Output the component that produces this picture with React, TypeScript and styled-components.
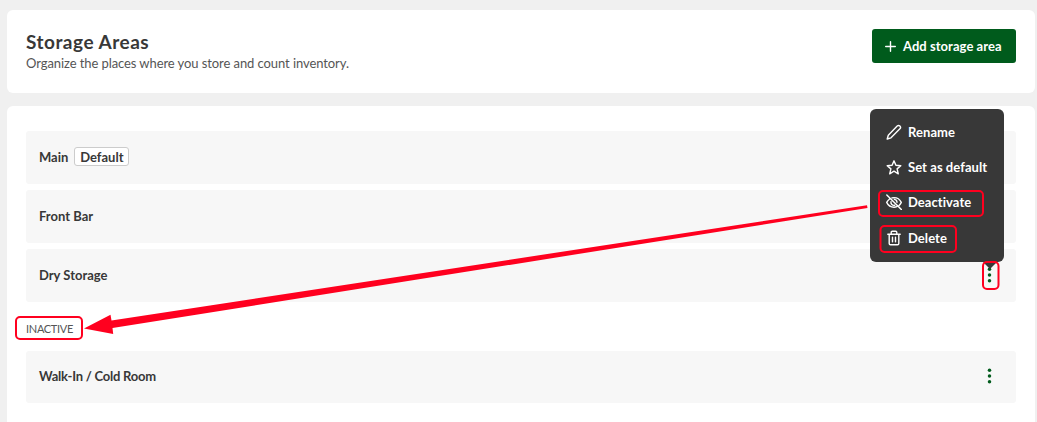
import React from 'react';
import styled, { createGlobalStyle } from 'styled-components';

const GlobalStyle = createGlobalStyle`
  * {
    box-sizing: border-box;
  }

  body {
    margin: 0;
    background: #f0f0f0;
    color: #383838;
    font-family: Lato, 'Open Sans', sans-serif;
    overflow: hidden;
  }
`;

const Page = styled.div`
  position: relative;
  display: flex;
  flex-direction: column;
  gap: 13px;
  height: 422px;
  padding: 10px 2px 0 7px;
  overflow: hidden;
`;

const Header = styled.header`
  display: flex;
  justify-content: space-between;
  align-items: flex-start;
  height: 83px;
  flex-shrink: 0;
  padding: 19px 19px 0;
  background: #fff;
  border-radius: 6px;
`;

const Title = styled.h1`
  margin: 1px 0 0;
  font-size: 19px;
  line-height: 24px;
  font-weight: 700;
  letter-spacing: 0.5px;
`;

const Subtitle = styled.p`
  margin: 0;
  font-size: 13px;
  line-height: 18px;
  letter-spacing: -0.08px;
  color: #555;
`;

const AddButton = styled.button`
  display: flex;
  align-items: center;
  gap: 7px;
  width: 144px;
  height: 34px;
  padding: 0 0 0 13px;
  background: #005b1c;
  color: #fff;
  border: none;
  border-radius: 3px;
  font-family: inherit;
  font-size: 13px;
  font-weight: 700;
  letter-spacing: 0.05px;
  white-space: nowrap;
`;

const Panel = styled.main`
  height: 340px;
  flex-shrink: 0;
  padding: 25px 19px;
  background: #fff;
  border-radius: 6px;
`;

const List = styled.div`
  display: flex;
  flex-direction: column;
  gap: 6px;
`;

const Row = styled.div<{ $inactive?: boolean }>`
  display: flex;
  align-items: center;
  height: ${({ $inactive }) => ($inactive ? 52 : 53)}px;
  padding: 0 24px 2px 13px;
  background: #f7f7f7;
  border-radius: 3px;
`;

const Name = styled.span<{ $tight?: boolean }>`
  flex: none;
  font-size: 13px;
  line-height: 18px;
  font-weight: 700;
  letter-spacing: ${({ $tight }) => ($tight ? '-0.22px' : '0')};
`;

const Badge = styled.span`
  display: flex;
  align-items: center;
  justify-content: center;
  width: 55px;
  height: 19px;
  margin-left: 6px;
  background: #fff;
  border: 1px solid #ccc;
  border-radius: 3px;
  font-size: 13px;
  font-weight: 700;
`;

const Dots = styled.svg`
  display: block;
  margin-left: auto;
`;

const SectionLabel = styled.div`
  height: 49px;
  padding-top: 19px;
  font-size: 11px;
  line-height: 16px;
  letter-spacing: -0.3px;
  color: #555;
`;

const Menu = styled.div`
  position: absolute;
  left: 870px;
  top: 109px;
  display: flex;
  flex-direction: column;
  width: 134px;
  height: 153px;
  padding: 5px 0 0 16px;
  background: #383838;
  border-radius: 6px;

  &::after {
    content: '';
    position: absolute;
    top: 153px;
    left: 113px;
    border: 7px solid transparent;
    border-top-color: #383838;
    border-bottom: 0;
  }
`;

const MenuItem = styled.div`
  display: flex;
  align-items: center;
  gap: 6px;
  height: 35.3px;
  color: #fff;
  font-size: 13px;
  font-weight: 700;
  letter-spacing: 0.06px;
  white-space: nowrap;
`;

const Icon = styled.svg`
  flex: none;
  fill: none;
  stroke: currentColor;
  stroke-width: 1.4;
  stroke-linecap: round;
  stroke-linejoin: round;
`;

const Annotations = styled.svg`
  position: absolute;
  inset: 0;
  pointer-events: none;
`;

const Kebab = () => (
  <Dots width="5" height="16" viewBox="0 0 5 16" fill="#005b1c">
    <circle cx="2.5" cy="2.3" r="1.75" />
    <circle cx="2.5" cy="8" r="1.75" />
    <circle cx="2.5" cy="13.7" r="1.75" />
  </Dots>
);

const menuItems = [
  {
    label: 'Rename',
    icon: <path d="M1.2 15 2.3 11.2 11.2 2.1a1.9 1.9 0 0 1 2.7 2.7L5 13.8Z" />,
  },
  {
    label: 'Set as default',
    icon: <path d="m8 1.8 1.9 4.5 4.9.4-3.7 3.2 1.2 4.9L8 12.2l-4.3 2.6 1.2-4.9-3.7-3.2 4.9-.4Z" />,
  },
  {
    label: 'Deactivate',
    icon: (
      <>
        <path d="M.8 1 15.4 15.6M6 3.9A8 8 0 0 1 8 3.6c3.4 0 5.9 1.9 7.3 4.8a9 9 0 0 1-2.2 3M3.6 5A9 9 0 0 0 .7 8.4c1.4 2.9 3.9 4.8 7.3 4.8a8 8 0 0 0 2.8-.5" />
        <path d="M8.4 5.4a3 3 0 0 1 2.6 2.9M5 7.6a3.1 3.1 0 0 0 3.7 3.7" />
      </>
    ),
  },
  {
    label: 'Delete',
    icon: (
      <path d="M1.8 4.2h12.4M3.2 4.2v9.3c0 .9.4 1.3 1.3 1.3h7c.9 0 1.3-.4 1.3-1.3V4.2M5.2 4.2V2.5c0-.8.4-1.2 1.2-1.2h3.2c.8 0 1.2.4 1.2 1.2v1.7M6.5 7.3v4.4M9.5 7.3v4.4" />
    ),
  },
];

const areas = ['Main', 'Front Bar', 'Dry Storage'];

const App: React.FC = () => {
  return (
    <>
      <GlobalStyle />
      <Page>
        <Header>
          <div>
            <Title>Storage Areas</Title>
            <Subtitle>Organize the places where you store and count inventory.</Subtitle>
          </div>
          <AddButton>
            <Icon width="11" height="11" viewBox="0 0 11 11">
              <path d="M5.5.7v9.6M.7 5.5h9.6" />
            </Icon>
            Add storage area
          </AddButton>
        </Header>
        <Panel>
          <List>
            {areas.map((area) => (
              <Row key={area}>
                <Name>{area}</Name>
                {area === 'Main' && <Badge>Default</Badge>}
                <Kebab />
              </Row>
            ))}
          </List>
          <SectionLabel>INACTIVE</SectionLabel>
          <Row $inactive>
            <Name $tight>Walk-In / Cold Room</Name>
            <Kebab />
          </Row>
        </Panel>
        <Menu>
          {menuItems.map(({ label, icon }) => (
            <MenuItem key={label}>
              <Icon width="16" height="16" viewBox="0 0 16 16">
                {icon}
              </Icon>
              {label}
            </MenuItem>
          ))}
        </Menu>
        <Annotations width="1037" height="422" viewBox="0 0 1037 422">
          <path
            d="M84 328.5 110.5 314.7 111.5 320.5 867 205.2 867.5 208 112.5 328 113.2 334Z"
            fill="#ff001f"
          />
          <g fill="none" stroke="#ff001f" strokeWidth="2">
            <rect x="16" y="317" width="66" height="22" rx="4" />
            <rect x="879" y="191" width="104" height="25" rx="4" />
            <rect x="880.5" y="226" width="75.5" height="26" rx="4" />
            <rect x="983" y="262" width="15.5" height="27" rx="4" />
          </g>
        </Annotations>
      </Page>
    </>
  );
};

export default App;
